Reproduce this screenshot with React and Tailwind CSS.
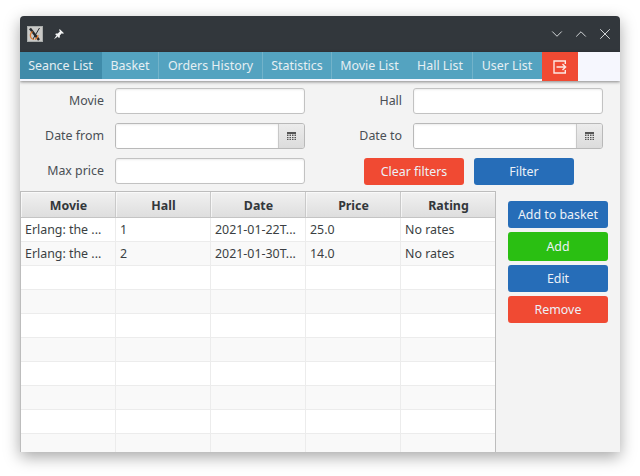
import { ChevronDown, ChevronUp, X } from "lucide-react";

const tabs = [
  { label: "Seance List", w: "w-[82px]", active: true },
  { label: "Basket", w: "w-[57px]" },
  { label: "Orders History", w: "w-[104px]" },
  { label: "Statistics", w: "w-[69px]" },
  { label: "Movie List", w: "w-[76px]", noLine: true },
  { label: "Hall List", w: "w-[65px]" },
  { label: "User List", w: "w-[69px]", noLine: true },
];

const columns = ["Movie", "Hall", "Date", "Price", "Rating"];

const rows = [
  ["Erlang: the ...", "1", "2021-01-22T...", "25.0", "No rates"],
  ["Erlang: the ...", "2", "2021-01-30T...", "14.0", "No rates"],
  ["", "", "", "", ""],
  ["", "", "", "", ""],
  ["", "", "", "", ""],
  ["", "", "", "", ""],
  ["", "", "", "", ""],
  ["", "", "", "", ""],
  ["", "", "", "", ""],
  ["", "", "", "", ""],
];

function AppIcon() {
  return (
    <svg width="16" height="16" viewBox="0 0 16 16">
      <rect width="16" height="16" fill="#a9acab" />
      <rect x="1" y="1" width="14" height="14" fill="#c9c9c7" />
      <path d="M3 2.5 L12 14" stroke="#24282c" strokeWidth="2.4" />
      <path d="M12.5 2 L6 13" stroke="#24282c" strokeWidth="1" />
      <path d="M5.5 5.5 C2 8 3 13 7 13.5 M11 9 C11 11 10 12.5 8 13.5" stroke="#d9772f" strokeWidth="1.2" fill="none" />
    </svg>
  );
}

function PinIcon() {
  return (
    <svg width="12" height="12" viewBox="0 0 12 12" fill="#f4f5f5">
      <path d="M6.6 1 L11 5.2 L9.8 5.8 L8.8 5.2 L6.8 7.4 L6.8 9.2 L6 10 L2.2 6.2 L3 5.4 L4.8 5.4 L7 3.2 L6.2 2.2 Z" />
      <path d="M3.4 7.6 L4.6 8.8 L1 11.2 Z" />
    </svg>
  );
}

function LogoutIcon() {
  return (
    <svg width="14" height="14" viewBox="0 0 14 14" fill="none" stroke="#fbe9e5" strokeWidth="1.4">
      <path d="M12.3 4 V1 H1 V13 H12.3 V10" />
      <path d="M3.5 7 H12.5 M9.5 4 L12.6 7 L9.5 10" />
    </svg>
  );
}

function CalendarIcon() {
  return (
    <svg width="9" height="8" viewBox="0 0 9 8" fill="#555">
      <path d="M0 0h9v2H0z" />
      <path d="M0 2.5h1.5V4H0zM2.5 2.5H4V4H2.5zM5 2.5h1.5V4H5zM7.5 2.5H9V4H7.5zM0 5h1.5v1.2H0zM2.5 5H4v1.2H2.5zM5 5h1.5v1.2H5zM7.5 5H9v1.2H7.5zM0 7h1.5v1H0zM2.5 7H4v1H2.5zM5 7h1.5v1H5zM7.5 7H9v1H7.5z" />
    </svg>
  );
}

function TextInput() {
  return (
    <input className="block w-[190px] h-[26px] bg-white border border-[#c2c2c2] rounded-[3px] shadow-[inset_0_1px_2px_rgba(0,0,0,0.08)] outline-none" />
  );
}

function DateInput() {
  return (
    <div className="flex w-[190px] h-[26px] border border-[#b9b9b9] rounded-[3px] overflow-hidden">
      <input className="flex-1 min-w-0 bg-white shadow-[inset_0_1px_2px_rgba(0,0,0,0.08)] outline-none" />
      <div className="w-[26px] flex items-center justify-center border-l border-[#c8c8c8] bg-gradient-to-b from-[#ececec] to-[#dcdcdc]">
        <CalendarIcon />
      </div>
    </div>
  );
}

function Label({ children }) {
  return <label className="text-right text-[12.4px] leading-[26px] text-[#4a4f55]">{children}</label>;
}

function ActionButton({ color, h, children }) {
  return (
    <button className={`w-[100px] ${h} ${color} pt-[2px] rounded-[3px] text-[12.4px] text-[#ecf1f7]`}>
      {children}
    </button>
  );
}

export default function App() {
  return (
    <div
      className="w-[640px] h-[476px] bg-white pt-4 px-5 overflow-hidden"
      style={{ fontFamily: '"Noto Sans", sans-serif' }}
    >
      <div className="w-[600px] h-[436px] flex flex-col rounded-t-[4px] bg-[#f3f3f3] shadow-[0_5px_16px_rgba(0,0,0,0.35)] overflow-hidden">
        {/* Title bar */}
        <div className="h-9 shrink-0 flex items-center bg-[#32373c] pl-[7px] pr-[6px]">
          <AppIcon />
          <span className="ml-[10px]">
            <PinIcon />
          </span>
          <div className="ml-auto flex items-center gap-[6px] text-[#d5d8da]">
            <ChevronDown size={18} strokeWidth={1.3} />
            <ChevronUp size={18} strokeWidth={1.3} />
            <X size={18} strokeWidth={1.3} />
          </div>
        </div>

        {/* Tabs */}
        <div className="h-[29px] shrink-0 flex bg-[#f6f7fe] shadow-[0_1px_3px_rgba(0,0,0,0.45)] relative">
          {tabs.map((t) => (
            <div
              key={t.label}
              className={`${t.w} h-[27px] pt-[2px] flex items-center justify-center text-[12.4px] text-[#e6eff3] border-r ${
                t.active ? "bg-[#3f8ba9] border-[#3f8ba9]" : "bg-[#54a3c0]"
              } ${t.noLine ? "border-[#54a3c0]" : t.active ? "" : "border-[#72b3ca]"}`}
            >
              {t.label}
            </div>
          ))}
          <div className="w-[36px] h-[29px] flex items-center justify-center bg-[#f04a33]">
            <LogoutIcon />
          </div>
        </div>

        {/* Filters */}
        <div className="shrink-0 grid grid-cols-[84px_190px_86px_190px] gap-x-[11px] gap-y-[9px] pt-[7px] pb-[6px]">
          <Label>Movie</Label>
          <TextInput />
          <Label>Hall</Label>
          <TextInput />
          <Label>Date from</Label>
          <DateInput />
          <Label>Date to</Label>
          <DateInput />
          <Label>Max price</Label>
          <TextInput />
          <div className="col-span-2 flex gap-[10px] pl-[48px]">
            <ActionButton color="bg-[#f04a33]" h="h-[27px]">Clear filters</ActionButton>
            <ActionButton color="bg-[#266db8]" h="h-[27px]">Filter</ActionButton>
          </div>
        </div>

        {/* Table and side buttons */}
        <div className="flex-1 min-h-0 flex">
          <div className="w-[476px] border-t border-l border-r border-[#bdbdbd] overflow-hidden bg-white">
            <div className="flex h-[26px] border-b border-[#c4c4c4] bg-gradient-to-b from-[#f1f1f1] to-[#dedede]">
              {columns.map((c) => (
                <div
                  key={c}
                  className="w-[95px] flex items-center justify-center pt-[3px] pl-[1px] text-[12.4px] font-bold text-[#33373b] border-r border-[#c9c9c9] last:border-r-0 last:w-[94px] shadow-[inset_1px_1px_0_rgba(255,255,255,0.6)]"
                >
                  {c}
                </div>
              ))}
            </div>
            {rows.map((row, i) => (
              <div key={i} className={`flex h-[24px] border-b border-[#ececec] ${i % 2 ? "bg-[#f9f9f9]" : "bg-white"}`}>
                {row.map((cell, j) => (
                  <div
                    key={j}
                    className="w-[95px] pl-[4px] text-[12.4px] leading-[23px] whitespace-nowrap overflow-hidden text-[#3b3f43] border-r border-[#ececec] last:border-r-0 last:w-[94px]"
                  >
                    {cell}
                  </div>
                ))}
              </div>
            ))}
          </div>
          <div className="flex-1 flex flex-col gap-[4px] pt-[10px] pl-[12px]">
            <ActionButton color="bg-[#266db8]" h="h-[27px]">Add to basket</ActionButton>
            <ActionButton color="bg-[#2abf12]" h="h-[29px]">Add</ActionButton>
            <ActionButton color="bg-[#266db8]" h="h-[27px]">Edit</ActionButton>
            <ActionButton color="bg-[#f04a33]" h="h-[27px]">Remove</ActionButton>
          </div>
        </div>
      </div>
    </div>
  );
}
